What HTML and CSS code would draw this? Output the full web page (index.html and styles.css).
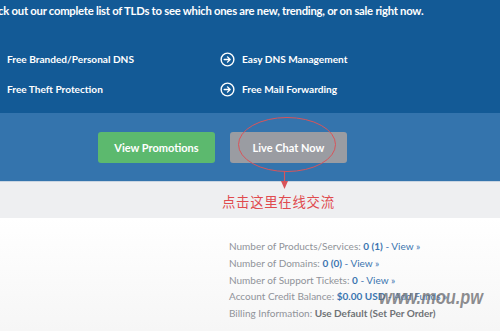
FILE: index.html
```html
<!DOCTYPE html>
<html>
<head>
<meta charset="utf-8">
<link rel="stylesheet" href="styles.css">
</head>
<body>
<div class="page">
  <section class="hero">
    <p class="lead">Check out our complete list of TLDs to see which ones are new, trending, or on sale right now.</p>
    <ul class="features">
      <li><span class="ic"><svg viewBox="0 0 16 16" width="15" height="15"><circle cx="8" cy="8" r="6.8" fill="none" stroke="#fff" stroke-width="1.5"/><path d="M4.5 8h6M8 5.2 10.8 8 8 10.8" fill="none" stroke="#fff" stroke-width="1.5" stroke-linecap="round" stroke-linejoin="round"/></svg></span>Free Branded/Personal DNS</li>
      <li><span class="ic"><svg viewBox="0 0 16 16" width="15" height="15"><circle cx="8" cy="8" r="6.8" fill="none" stroke="#fff" stroke-width="1.5"/><path d="M4.5 8h6M8 5.2 10.8 8 8 10.8" fill="none" stroke="#fff" stroke-width="1.5" stroke-linecap="round" stroke-linejoin="round"/></svg></span>Easy DNS Management</li>
      <li><span class="ic"><svg viewBox="0 0 16 16" width="15" height="15"><circle cx="8" cy="8" r="6.8" fill="none" stroke="#fff" stroke-width="1.5"/><path d="M4.5 8h6M8 5.2 10.8 8 8 10.8" fill="none" stroke="#fff" stroke-width="1.5" stroke-linecap="round" stroke-linejoin="round"/></svg></span>Free Theft Protection</li>
      <li><span class="ic"><svg viewBox="0 0 16 16" width="15" height="15"><circle cx="8" cy="8" r="6.8" fill="none" stroke="#fff" stroke-width="1.5"/><path d="M4.5 8h6M8 5.2 10.8 8 8 10.8" fill="none" stroke="#fff" stroke-width="1.5" stroke-linecap="round" stroke-linejoin="round"/></svg></span>Free Mail Forwarding</li>
    </ul>
  </section>
  <section class="cta">
    <a class="btn btn-green">View Promotions</a>
    <a class="btn btn-gray">Live Chat Now</a>
  </section>
  <section class="note">
    <span class="note-text">点击这里在线交流</span>
  </section>
  <section class="account">
    <ul class="stats">
      <li>Number of Products/Services: <b class="v">0 (1)</b> <span class="v">- View »</span></li>
      <li>Number of Domains: <b class="v">0 (0)</b> <span class="v">- View »</span></li>
      <li>Number of Support Tickets: <b class="v">0</b> <span class="v">- View »</span></li>
      <li>Account Credit Balance: <b class="v">$0.00 USD</b> <span class="v">- Add Funds »</span></li>
      <li>Billing Information: <b class="dk">Use Default (Set Per Order)</b></li>
    </ul>
  </section>
  <svg class="mark" width="500" height="331" viewBox="0 0 500 331">
    <ellipse cx="287" cy="144.5" rx="48.5" ry="27" fill="none" stroke="#d9545a" stroke-width="1"/>
    <path d="M284.5 171.5V184" stroke="#d9545a" stroke-width="1.2"/>
    <path d="M281 181 284.5 189 288 181Z" fill="#d9545a"/>
  </svg>
  <div class="wm">www.mou.pw</div>
</div>
</body>
</html>
```
FILE: styles.css
```css
html, body {
  margin: 0;
  padding: 0;
}
body {
  width: 500px;
  height: 331px;
  overflow: hidden;
  font-family: Lato, "Open Sans", "Noto Sans CJK SC", sans-serif;
}
.page {
  position: relative;
  width: 500px;
  height: 331px;
  overflow: hidden;
}
.hero {
  background: #135a96;
  height: 113px;
  color: #fff;
  overflow: hidden;
}
.lead {
  margin: 0 0 0 -21px;
  padding-top: 2px;
  font-size: 11.3px;
  font-weight: 700;
  line-height: 17px;
  letter-spacing: -0.26px;
  white-space: nowrap;
}
.features {
  list-style: none;
  margin: 32px 0 0 -15px;
  padding: 0;
  display: grid;
  grid-template-columns: 235px 1fr;
  row-gap: 13px;
}
.features li {
  display: flex;
  align-items: center;
  gap: 7px;
  font-size: 10.1px;
  font-weight: 700;
  line-height: 17px;
}
.ic {
  display: flex;
  width: 15px;
  height: 15px;
}
.cta {
  background: #3474ad;
  height: 68px;
  display: flex;
  align-items: center;
  gap: 15px;
  padding-left: 98px;
  box-sizing: border-box;
}
.btn {
  display: flex;
  align-items: center;
  justify-content: center;
  width: 117px;
  height: 31px;
  border-radius: 3px;
  color: #fff;
  font-size: 11px;
  font-weight: 700;
}
.btn-green { background: #5cb96e; }
.btn-gray { background: #9a9ca2; }
.note {
  background: #eeeff1;
  height: 37px;
  border-top: 1px solid #c9d5e2;
  box-sizing: border-box;
  padding-left: 222px;
  display: flex;
  align-items: center;
}
.note-text {
  color: #e04b4f;
  font-family: "Noto Sans CJK SC", sans-serif;
  font-size: 13.4px;
  letter-spacing: 0.7px;
  margin-top: 2px;
}
.account {
  background: linear-gradient(#ffffff, #f6f6f6);
  height: 113px;
  padding: 20px 0 0 229px;
  box-sizing: border-box;
}
.stats {
  list-style: none;
  margin: 0;
  padding: 0;
}
.stats li {
  font-size: 10px;
  line-height: 16.8px;
  color: #909399;
  white-space: nowrap;
}
.v { color: #3b75b0; font-weight: 400; }
b.v { font-weight: 700; }
.dk { color: #6f7276; font-weight: 700; }
.mark {
  position: absolute;
  left: 0;
  top: 0;
  pointer-events: none;
}
.wm {
  position: absolute;
  left: 379px;
  top: 285px;
  font-family: "Liberation Sans", sans-serif;
  font-weight: 700;
  font-style: italic;
  font-size: 21px;
  color: rgba(110, 110, 114, 0.78);
  transform: scaleX(0.78);
  transform-origin: left top;
}
```
